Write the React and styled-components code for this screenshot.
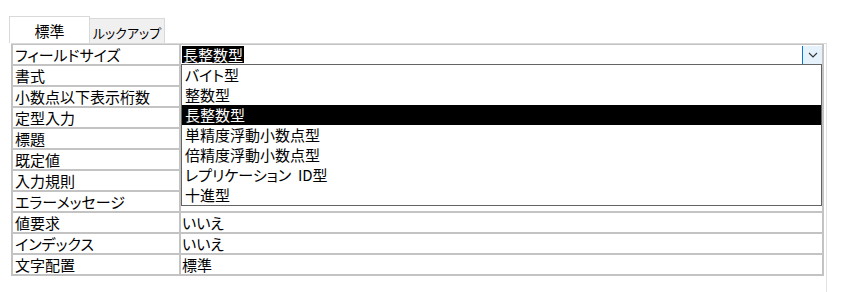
import React from 'react';
import styled, { createGlobalStyle } from 'styled-components';

const GlobalStyle = createGlobalStyle`
  html, body {
    margin: 0;
    background: #ffffff;
  }
  body {
    font-family: "Noto Sans CJK JP", "Noto Sans", sans-serif;
    font-feature-settings: "palt";
    color: #000000;
  }
`;

const Page = styled.div`
  width: 842px;
  height: 292px;
  overflow: hidden;
  padding: 16px 0 0 9px;
  box-sizing: border-box;
`;

const TabBar = styled.div`
  display: flex;
  align-items: flex-end;
  height: 27px;
`;

const Tab = styled.div`
  box-sizing: border-box;
  display: flex;
  align-items: center;
  justify-content: center;
  width: ${(p) => (p.$active ? '81px' : '75px')};
  height: ${(p) => (p.$active ? '27px' : '25px')};
  border: 1px solid #d9d9d9;
  border-bottom: none;
  ${(p) => !p.$active && 'border-left: none;'}
  background: ${(p) => (p.$active ? '#ffffff' : '#f0f0f0')};
  font-size: ${(p) => (p.$active ? '15px' : '13px')};
  line-height: 1;
  padding-top: ${(p) => (p.$active ? '0' : '2px')};
`;

const Panel = styled.div`
  box-sizing: border-box;
  margin-left: 2px;
  width: 816px;
  height: 260px;
  border-top: 1px solid #d9d9d9;
  border-right: 1px solid #e2e2e2;
  padding-right: 2px;
`;

const Grid = styled.div`
  display: grid;
  grid-template-columns: 166px 641px;
  grid-auto-rows: 19px;
  gap: 2px;
  padding: 1px 2px 2px 2px;
  background: #c3c3c3;
  width: max-content;
`;

const Label = styled.div`
  background: #ffffff;
  font-size: 15px;
  line-height: 19px;
  padding-left: 2px;
  white-space: nowrap;
  overflow: hidden;
`;

const Value = styled.div`
  position: relative;
  display: flex;
  align-items: center;
  background: #ffffff;
  font-size: 15px;
  line-height: 19px;
  padding-left: 1px;
  white-space: nowrap;
`;

const Selected = styled.span`
  background: #000000;
  color: #ffffff;
  line-height: 17px;
  padding: 0 1px;
`;

const DropButton = styled.div`
  box-sizing: border-box;
  margin-left: auto;
  width: 20px;
  height: 18px;
  align-self: flex-end;
  display: flex;
  align-items: center;
  justify-content: center;
  background: #e5f1fb;
  border-left: 1px solid #0078d7;
`;

const List = styled.ul`
  position: absolute;
  left: 0;
  top: 19px;
  width: 641px;
  box-sizing: border-box;
  margin: 0;
  padding: 0;
  list-style: none;
  background: #ffffff;
  border: 1px solid #646464;
  z-index: 2;
`;

const Option = styled.li`
  height: 20px;
  line-height: 20px;
  font-size: 15px;
  padding-left: 3px;
  white-space: pre;
  background: ${(p) => (p.$active ? '#000000' : '#ffffff')};
  color: ${(p) => (p.$active ? '#ffffff' : '#000000')};
`;

const rows = [
  ['フィールドサイズ', null],
  ['書式', ''],
  ['小数点以下表示桁数', ''],
  ['定型入力', ''],
  ['標題', ''],
  ['既定値', ''],
  ['入力規則', ''],
  ['エラーメッセージ', ''],
  ['値要求', 'いいえ'],
  ['インデックス', 'いいえ'],
  ['文字配置', '標準'],
];

const options = [
  'バイト型',
  '整数型',
  '長整数型',
  '単精度浮動小数点型',
  '倍精度浮動小数点型',
  'レプリケーション  ID型',
  '十進型',
];

function Chevron() {
  return (
    <svg width="10" height="6" viewBox="0 0 10 6">
      <polyline points="1,1 5,5 9,1" fill="none" stroke="#333333" strokeWidth="1.1" />
    </svg>
  );
}

export default function App() {
  return (
    <>
      <GlobalStyle />
      <Page>
        <TabBar>
          <Tab $active>標準</Tab>
          <Tab>ルックアップ</Tab>
        </TabBar>
        <Panel>
          <Grid>
            {rows.map(([label, value]) => (
              <React.Fragment key={label}>
                <Label>{label}</Label>
                {value === null ? (
                  <Value>
                    <Selected>長整数型</Selected>
                    <DropButton>
                      <Chevron />
                    </DropButton>
                    <List>
                      {options.map((o) => (
                        <Option key={o} $active={o === '長整数型'}>
                          {o}
                        </Option>
                      ))}
                    </List>
                  </Value>
                ) : (
                  <Value>{value}</Value>
                )}
              </React.Fragment>
            ))}
          </Grid>
        </Panel>
      </Page>
    </>
  );
}
